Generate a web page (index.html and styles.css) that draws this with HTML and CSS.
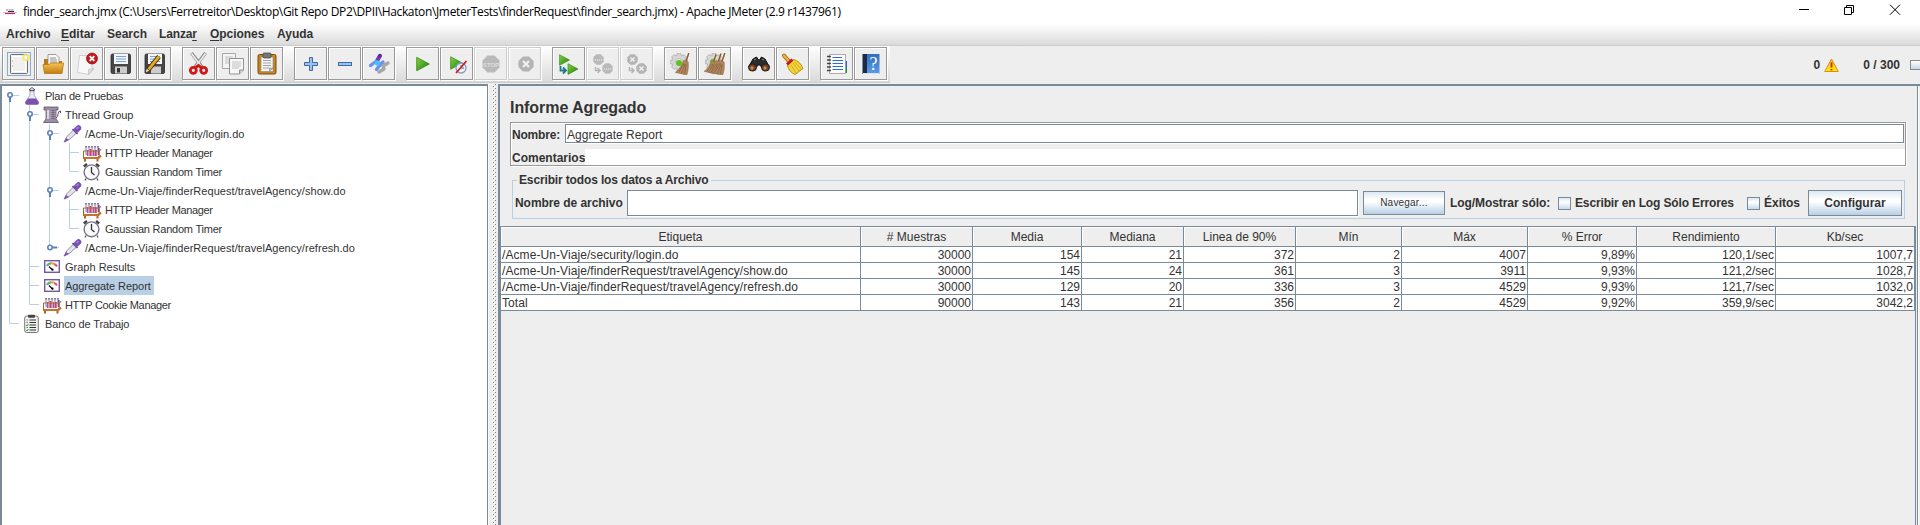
FILE: index.html
```html
<!DOCTYPE html>
<html lang="es">
<head>
<meta charset="utf-8">
<title>Apache JMeter</title>
<link rel="stylesheet" href="styles.css">
</head>
<body>
<svg class="defs" width="0" height="0" aria-hidden="true">
  <defs>
    <linearGradient id="gold" x1="0" y1="0" x2="0" y2="1"><stop offset="0" stop-color="#f3c552"/><stop offset="1" stop-color="#c17d11"/></linearGradient>
    <linearGradient id="green" x1="0" y1="0" x2="1" y2="1"><stop offset="0" stop-color="#7fd83c"/><stop offset="1" stop-color="#237a0c"/></linearGradient>
    <linearGradient id="book" x1="0" y1="0" x2="0" y2="1"><stop offset="0" stop-color="#2f6fc0"/><stop offset="1" stop-color="#5d9be6"/></linearGradient>
    <linearGradient id="warn" x1="0" y1="0" x2="0" y2="1"><stop offset="0" stop-color="#fbb034"/><stop offset="1" stop-color="#fff200"/></linearGradient>
    <symbol id="g-v" viewBox="0 0 20 19"><path d="M7.500 0V19" class="ln"/></symbol>
    <symbol id="g-t" viewBox="0 0 20 19"><path d="M7.500 0V19M7.500 9.500H17" class="ln"/></symbol>
    <symbol id="g-l" viewBox="0 0 20 19"><path d="M7.500 0V9.500H17" class="ln"/></symbol>
    <symbol id="g-root" viewBox="0 0 20 19"><path d="M7.500 9V19M8 9.500H17" class="ln"/><path d="M8 11V16" class="hd2"/><circle cx="8" cy="9" r="2.200" class="hd"/></symbol>
    <symbol id="g-open" viewBox="0 0 20 19"><path d="M7.500 0V19M8 9.500H17" class="ln"/><path d="M8 11V16" class="hd2"/><circle cx="8" cy="9" r="2.200" class="hd"/></symbol>
    <symbol id="g-shut" viewBox="0 0 20 19"><path d="M7.500 0V7M8 9.500H17" class="ln"/><path d="M10 9.500H15" class="hd2"/><circle cx="8" cy="9.500" r="2.200" class="hd"/></symbol>

    <symbol id="i-flask" viewBox="0 0 22 19"><path d="M7 4L10 1.500L13 4" fill="none" stroke="#555" stroke-width="1"/><path d="M8 4.500H12V9L16.500 16Q17 18.500 15 18.500H5Q3 18.500 3.500 16L8 9Z" fill="#eceaf2" stroke="#9a93aa" stroke-width=".8"/><path d="M6 12.500H14L16.500 16Q17 18.500 15 18.500H5Q3 18.500 3.500 16Z" fill="#7b52b0"/><path d="M7.500 4.500H12.500" stroke="#555" stroke-width="1.500"/></symbol>
    <symbol id="i-spool" viewBox="0 0 22 19"><path d="M2 2H16V5H14V14L16.500 17.500H1.500L4 14V5H2Z" fill="#9b8da5" stroke="#5e5368" stroke-width=".8"/><path d="M6 5V14" stroke="#d8d0dc" stroke-width="2"/><path d="M11 5V14" stroke="#75687f" stroke-width="3"/><path d="M4 6.500H14M4 8.500H14M4 10.500H14M4 12.500H14" stroke="#fff" stroke-opacity=".3" stroke-width=".7"/><path d="M14 13Q16 12 16 9Q16 6 18.500 6V8" fill="none" stroke="#5e5368" stroke-width="1"/></symbol>
    <symbol id="i-dropper" viewBox="0 0 22 19"><path d="M2 18L5 12.500L11.500 6L14.500 9L8 15Z" fill="#e6e2ec" stroke="#8c849a" stroke-width=".9"/><path d="M1.800 18.400L4 14L7 16Z" fill="#7d55b5"/><path d="M10.500 5L15.500 10" stroke="#58458a" stroke-width="1.600"/><path d="M14.500 6L16.500 4" stroke="#7a50b4" stroke-width="5.500" stroke-linecap="round"/><path d="M15 4.500L16 3.500" stroke="#a98bd6" stroke-width="1.500" stroke-linecap="round"/></symbol>
    <symbol id="i-tubes" viewBox="0 0 22 19"><path d="M4 3V12M7 3V13M10 3V13M13 3V13M16 3V12" stroke="#c4bcd6" stroke-width="2.200"/><path d="M4 3V4.500M7 3V4.500M10 3V4.500M13 3V4.500M16 3V4.500" stroke="#75708a" stroke-width="1.500"/><path d="M5.500 7V13M11.500 7V13" stroke="#9a55b0" stroke-width="1.300"/><path d="M8.500 6V13M13.800 7V13" stroke="#e0385a" stroke-width="1.800"/><path d="M16.800 5V12" stroke="#3c49d0" stroke-width="1.500"/><path d="M1.500 8H17L19 6.500" fill="none" stroke="#b06c38" stroke-width="1.200"/><path d="M1 15H16.500L19 12.500" fill="none" stroke="#c8732c" stroke-width="2.200"/><path d="M1.500 8V15M17 8V15" stroke="#a9622a"/><path d="M3 16V18.500M15.500 16V18.500" stroke="#a9622a" stroke-width="2"/></symbol>
    <symbol id="i-clock" viewBox="0 0 22 19"><path d="M1.800 4.500L5 2M14 2L17.200 4.500" stroke="#444" stroke-width="2.400"/><circle cx="9.500" cy="10.300" r="7.400" fill="#faf9fc" stroke="#7b7488" stroke-width="1.400"/><path d="M9.500 5V10.500L12.500 13" fill="none" stroke="#333" stroke-width="1.300"/><path d="M4 16.500L3 18.500M15 16.500L16 18.500" stroke="#555" stroke-width="1.300"/></symbol>
    <symbol id="i-gauge" viewBox="0 0 22 19"><rect x="2.700" y="3.700" width="14.600" height="11.600" fill="#fff" stroke="#7358a6" stroke-width="1.400"/><path d="M5 9Q6 6.500 9 6.300" fill="none" stroke="#5cb277" stroke-width="2.200"/><path d="M9 6.300Q11 6 12 7" fill="none" stroke="#efa23a" stroke-width="2.200"/><path d="M12 7Q14 7.500 15 9.500" fill="none" stroke="#ee5a5a" stroke-width="2.200"/><path d="M7 9.500L10.500 13" stroke="#111" stroke-width="1.200"/><circle cx="10.500" cy="12.700" r="1.100"/></symbol>
    <symbol id="i-bench" viewBox="0 0 22 19"><rect x="2.700" y="2" width="13.600" height="16.500" rx="2" fill="#f1f1f1" stroke="#777" stroke-width="1"/><rect x="6" y=".8" width="7" height="3" rx="1" fill="#444"/><path d="M7.500 6H14M7.500 8.500H14M7.500 11H14M7.500 13.500H14M7.500 16H14" stroke="#333" stroke-width="1.200"/><path d="M4.500 6H6M4.500 8.500H6M4.500 13.500H6" stroke="#777"/><path d="M4.300 11L5 12L6.300 10M4.300 16L5 17L6.300 15" fill="none" stroke="#2a9b3a"/></symbol>
    <symbol id="stop" viewBox="0 0 18 18"><path d="M5.500 .5H12.500L17.500 5.500V12.500L12.500 17.500H5.500L.5 12.500V5.500Z"/></symbol>
    <symbol id="play" viewBox="0 0 14 15"><path d="M.7 .8L13.300 7.500L.7 14.300Z" fill="url(#green)" stroke="#2b7a10" stroke-width=".7"/></symbol>
    <symbol id="gear" viewBox="0 0 16 16"><path d="M6.500 0H9.500L10 2.500L12.500 1.500L14.500 3.500L13.500 6L16 6.500V9.500L13.500 10L14.500 12.500L12.500 14.500L10 13.500L9.500 16H6.500L6 13.500L3.500 14.500L1.500 12.500L2.500 10L0 9.500V6.500L2.500 6L1.500 3.500L3.500 1.500L6 2.500Z" fill="#d6d6d4" stroke="#a4a4a4" stroke-width=".6"/><circle cx="8" cy="8" r="3" fill="#f2f2f2" stroke="#aaa" stroke-width=".6"/></symbol>
    <symbol id="broom" viewBox="0 0 14 21"><path d="M13 0L10 9" stroke="#8a5a28" stroke-width="1.400"/><path d="M8 7L12.500 8.500Q13 17 11 21L0 18.500Q6 14 8 7Z" fill="#b08660" stroke="#8f6a46" stroke-width=".5"/><path d="M8.500 10L3 18.500M9.500 10.500L6 19.500M10.500 11L9 20" stroke="#7c5733" stroke-width=".6"/></symbol>
  </defs>
</svg>

<header class="titlebar">
  <svg class="app" width="14" height="8"><path d="M0 4.500H14" stroke="#ccc"/><path d="M3 2H11" stroke="#777" stroke-width="1.200" stroke-dasharray="2 .6"/><path d="M2 5.500H12" stroke="#d4208c" stroke-width="1.200"/><path d="M5 3.500H11" stroke="#333"/></svg>
  <span class="caption">finder_search.jmx (C:\Users\Ferretreitor\Desktop\Git Repo DP2\DPII\Hackaton\JmeterTests\finderRequest\finder_search.jmx) - Apache JMeter (2.9 r1437961)</span>
  <svg class="winbtns" width="104" height="12" fill="none" stroke="#000"><path d="M0 5.500H10"/><path d="M45.500 3.500H52.500V10.500H45.500ZM47.500 3V1.500H54.500V8.500H53"/><path d="M91 .7L101 10.700M101 .7L91 10.700"/></svg>
</header>

<nav class="menubar">
  <span class="m1">Archivo</span><span class="m2"><u>E</u>ditar</span><span class="m3">Search</span><span class="m4">Lanza<u>r</u></span><span class="m5"><u>O</u>pciones</span><span class="m6">Ayuda</span>
</nav>

<div class="toolbar">
  <div class="tools">
    <div class="grp">
      <button class="tb"><svg width="31" height="31"><rect x="4.500" y="4.500" width="23" height="23" fill="none" stroke="#8fa9cc"/><rect x="7.500" y="6.500" width="17" height="19" rx="1" fill="#f0f0f0" stroke="#6f6f6f"/><path d="M9.500 8.500H22.500V23.500H9.500Z" fill="none" stroke="#fff"/><path d="M9 13H10M9 18H10" stroke="#999"/><circle cx="23" cy="9.500" r="3.800" fill="#f6e468" fill-opacity=".85"/><circle cx="23" cy="9.500" r="1.700" fill="#fffdf0"/></svg></button>
      <button class="tb"><svg width="31" height="31"><path d="M7 14V11H12L13 13H25V24H7Z" fill="#b87a14"/><path d="M11 6.500H19L22 9.500V18H11Z" fill="#f8f8f8" stroke="#888" stroke-width=".8"/><path d="M13 10H19M13 12H20M13 14H20" stroke="#777" stroke-width=".8"/><path d="M6 16.500H12L14 15H26.500L25 25.500H7.500Z" fill="url(#gold)" stroke="#b8790f" stroke-width=".8"/></svg></button>
      <button class="tb"><svg width="31" height="31"><path d="M8.500 7.500H23.500L20.500 19L23 21L18 26.500L6.500 24.500Z" fill="#f8f8f8" stroke="#d0d0d0"/><path d="M23 20L17.500 26.500L17.500 21.500Z" fill="#ddd" stroke="#bbb" stroke-width=".6"/><circle cx="21" cy="10.500" r="5.500" fill="#c4181b" stroke="#8f0c0c" stroke-width=".7"/><path d="M18.700 8.200L23.300 12.800M23.300 8.200L18.700 12.800" stroke="#fff" stroke-width="1.800"/></svg></button>
      <button class="tb"><svg width="31" height="31"><rect x="6" y="6" width="19.500" height="19.500" rx="1.500" fill="#474747" stroke="#2a2a2a" stroke-width=".8"/><rect x="9" y="6" width="14" height="10" fill="#f3f6fa"/><path d="M11 8.500H21M11 11H21M11 13.500H21" stroke="#7a9fd0"/><rect x="10" y="18.500" width="12" height="7" fill="#ccc"/><rect x="12" y="20" width="3" height="4.500" fill="#333"/></svg></button>
      <button class="tb"><svg width="31" height="31"><rect x="6" y="6" width="19.500" height="19.500" rx="1.500" fill="#474747" stroke="#2a2a2a" stroke-width=".8"/><rect x="9" y="6" width="14" height="10" fill="#f3f6fa"/><path d="M11 8.500H21M11 11H21M11 13.500H21" stroke="#7a9fd0"/><rect x="12" y="18.500" width="10" height="7" fill="#ccc"/><path d="M9.500 21.500L20 8.500" stroke="#3a2a10" stroke-width="4.600"/><path d="M9.500 21.500L20 8.500" stroke="#e9a820" stroke-width="2.800"/><path d="M6 25L7.500 20L11 23Z" fill="#f0dcb0" stroke="#222" stroke-width=".7"/></svg></button>
    </div>
    <div class="grp">
      <button class="tb"><svg width="31" height="31"><path d="M8.500 5L19 19M22.500 5L12 19" stroke="#8c8c8c" stroke-width="3.400"/><path d="M8.500 5.500L19 19.500M22.500 5.500L12 19.500" stroke="#e8e8e8" stroke-width="1.800"/><g fill="none" stroke="#cf1a1a" stroke-width="2.800"><circle cx="10.300" cy="22.300" r="3"/><circle cx="20.700" cy="22.300" r="3"/><path d="M12 20L15.500 17.500L19 20"/></g></svg></button>
      <button class="tb"><svg width="31" height="31"><path d="M5.500 5.500H18.500V20.500H5.500Z" fill="#f4f4f4" stroke="#a8a8a8"/><path d="M8 9H16M8 11H16M8 13H12M8 15H12" stroke="#c2c2c2"/><path d="M12.500 10.500H26.500V22L22.500 26H12.500Z" fill="#f7f7f7" stroke="#929292"/><path d="M15 14H24M15 16H24M15 18H24M15 20H22" stroke="#c2c2c2"/><path d="M26.500 22H22.500V26" fill="#ccc" stroke="#929292"/></svg></button>
      <button class="tb"><svg width="31" height="31"><rect x="7" y="6.500" width="18" height="19.500" rx="1.500" fill="#c6841f" stroke="#7d4d08"/><rect x="10" y="9" width="12" height="14.500" fill="#f4f4f4" stroke="#888" stroke-width=".6"/><rect x="12" y="5" width="8" height="5" rx="1" fill="#777" stroke="#444" stroke-width=".7"/><path d="M12 12.500H20M12 15H20M12 17.500H20M12 20H18" stroke="#a5a5a5"/><path d="M22 20L18.500 23.500V20Z" fill="#bbb" stroke="#777" stroke-width=".5"/></svg></button>
    </div>
    <div class="grp">
      <button class="tb"><svg width="31" height="31"><path d="M14.500 9.500H17.500V14.500H22.500V17.500H17.500V22.500H14.500V17.500H9.500V14.500H14.500Z" fill="#9dc0e8" stroke="#3a6cab"/></svg></button>
      <button class="tb"><svg width="31" height="31"><rect x="9.500" y="14.500" width="13" height="3" fill="#9dc0e8" stroke="#3a6cab"/></svg></button>
      <button class="tb"><svg width="31" height="31"><path d="M25 15L20 18L21 21L16 24" fill="none" stroke="#a7a7a7" stroke-width="3.400" stroke-linecap="round" stroke-linejoin="round"/><path d="M16.500 8.500L14 13" stroke="#7b35b5" stroke-width="4" stroke-linecap="round"/><path d="M7.500 17.500L13 13.500M14 15L17 17L13.500 21.500M17 16.500L20 14" fill="none" stroke="#6f8fee" stroke-width="3.400" stroke-linecap="round" stroke-linejoin="round"/><circle cx="14.500" cy="15" r="2.600" fill="#3cc8f5"/><circle cx="17" cy="7.800" r="2" fill="#6227a0"/></svg></button>
    </div>
    <div class="grp">
      <button class="tb"><svg width="31" height="31"><use href="#play" x="9" y="8.500" width="14" height="15"/></svg></button>
      <button class="tb"><svg width="31" height="31"><use href="#play" x="9" y="8" width="13" height="14"/><circle cx="20" cy="20" r="5" fill="#eef3fa" fill-opacity=".8" stroke="#7f9fc4" stroke-width="1.300"/><path d="M25.500 13L15 25" stroke="#d11" stroke-width="1.600"/><path d="M20 17V20H23" fill="none" stroke="#567"/></svg></button>
      <button class="tb off"><svg width="31" height="31"><use href="#stop" x="7" y="7" width="18" height="18" fill="#b9b9b9"/><text x="16" y="18.500" class="stp">STOP</text></svg></button>
      <button class="tb off"><svg width="31" height="31"><use href="#stop" x="9" y="8" width="16" height="16" fill="#b4b4b4"/><path d="M14 13L20 19M20 13L14 19" stroke="#eee" stroke-width="2.400"/></svg></button>
    </div>
    <div class="grp">
      <button class="tb"><svg width="31" height="31"><use href="#play" x="6" y="6" width="11" height="12"/><use href="#play" x="14" y="15" width="12" height="12"/><path d="M7.500 18V22.500H12M10 19.500L13 22.500L10 25.500" fill="none" stroke="#1d7a86" stroke-width="1.800"/></svg></button>
      <button class="tb off"><svg width="31" height="31"><use href="#stop" x="6" y="6" width="11" height="11" fill="#b9b9b9"/><use href="#stop" x="15" y="15" width="11" height="11" fill="#b9b9b9"/><path d="M8 12H15M17 21H24" stroke="#ddd" stroke-width="1.500" stroke-dasharray="1.200 .8"/><path d="M8.500 19V22.500H12M10.500 20L13 22.500L10.500 25" fill="none" stroke="#b4b4b4" stroke-width="1.500"/></svg></button>
      <button class="tb off"><svg width="31" height="31"><use href="#stop" x="6" y="6" width="11" height="11" fill="#b4b4b4"/><use href="#stop" x="15" y="15" width="11" height="11" fill="#b4b4b4"/><path d="M9.500 9.500L13.500 13.500M13.500 9.500L9.500 13.500M18.500 18.500L22.500 22.500M22.500 18.500L18.500 22.500" stroke="#eee" stroke-width="1.700"/><path d="M8.500 19V22.500H12M10.500 20L13 22.500L10.500 25" fill="none" stroke="#b4b4b4" stroke-width="1.500"/></svg></button>
    </div>
    <div class="grp">
      <button class="tb"><svg width="31" height="31"><use href="#gear" x="5" y="5" width="18" height="18"/><circle cx="14" cy="15" r="3" fill="#5fc31e"/><use href="#broom" x="10" y="5" width="15" height="22"/></svg></button>
      <button class="tb"><svg width="31" height="31"><use href="#gear" x="6" y="5" width="18" height="18"/><circle cx="14" cy="14" r="3" fill="#5fc31e"/><use href="#broom" x="5" y="5" width="13" height="22"/><use href="#broom" x="9" y="5" width="14" height="22"/><use href="#broom" x="12" y="5" width="15" height="22"/></svg></button>
    </div>
    <div class="grp">
      <button class="tb"><svg width="31" height="31"><path d="M10 11L13.500 9L15.500 12H16.500L18.500 9L22 11L26.500 19L21 23L17 17H15L11 23L5.500 19Z" fill="#2c2c2c" stroke="#111"/><path d="M11 12L13 11M21 12L19 11" stroke="#888"/><ellipse cx="9.500" cy="19.500" rx="4" ry="3.600" fill="#6e3d20" stroke="#222"/><ellipse cx="22.500" cy="19.500" rx="4" ry="3.600" fill="#6e3d20" stroke="#222"/><circle cx="9" cy="20" r="1.700" fill="#c98555"/><circle cx="22" cy="20" r="1.700" fill="#c98555"/></svg></button>
      <button class="tb"><svg width="31" height="31"><path d="M7 7.500L12.500 14" stroke="#9b6512" stroke-width="4" stroke-linecap="round"/><path d="M7 7.500L12.500 14" stroke="#eeb140" stroke-width="2.400" stroke-linecap="round"/><path d="M10.500 17.500L16.500 11.500Q23 13 26 20.500L18 26.500Q12 24 10.500 17.500Z" fill="#f2d43a" stroke="#b8920c"/><path d="M14 17L19 25M16 15L22 23M18 14L24 21" stroke="#c9a415" stroke-width=".8"/><path d="M10 16.500L15.500 11.500" stroke="#c4161c" stroke-width="3"/></svg></button>
    </div>
    <div class="grp">
      <button class="tb"><svg width="31" height="31"><path d="M23 13H26V20H23Z" fill="#2a62d8"/><path d="M23 20H26V25H23Z" fill="#1b8a2c"/><path d="M8.500 6.500H24.500V25.500H8.500Z" fill="#fbfbfb" stroke="#999" stroke-width=".8"/><path d="M11.500 9.500H21M11.500 12.500H22M11.500 15.500H22M11.500 18.500H22M11.500 21.500H22" stroke="#2d6fd2"/><path d="M6 8.500H10M6 12H10M6 15.500H10M6 19H10M6 22.500H10" stroke="#444" stroke-width="1.400"/></svg></button>
      <button class="tb"><svg width="31" height="31"><path d="M8 6H24.500V26H8Z" fill="url(#book)"/><path d="M7.500 6H12V26H7.500Z" fill="#1d2a44"/><path d="M8 25.500H24" stroke="#d7e3f5"/><text x="18.500" y="21.500" class="q">?</text></svg></button>
    </div>
  </div>
  <div class="counters">
    <span class="errs">0</span>
    <svg width="15" height="15"><path d="M7.500 1L14.300 13.500H.7Z" fill="url(#warn)" stroke="#e08a1a" stroke-linejoin="round"/><path d="M7.500 4.500V9.500M7.500 11V12.500" stroke="#b5380f" stroke-width="1.800"/></svg>
    <span class="thr">0 / 300</span>
    <i class="led"></i>
  </div>
</div>

<main class="work">
  <section class="tree">
    <div class="row"><svg class="g"><use href="#g-root"/></svg><svg class="ic"><use href="#i-flask"/></svg><span class="t2">Plan de Pruebas</span></div>
    <div class="row"><svg class="g"><use href="#g-v"/></svg><svg class="g"><use href="#g-open"/></svg><svg class="ic"><use href="#i-spool"/></svg><span>Thread Group</span></div>
    <div class="row"><svg class="g"><use href="#g-v"/></svg><svg class="g"><use href="#g-v"/></svg><svg class="g"><use href="#g-open"/></svg><svg class="ic"><use href="#i-dropper"/></svg><span>/Acme-Un-Viaje/security/login.do</span></div>
    <div class="row"><svg class="g"><use href="#g-v"/></svg><svg class="g"><use href="#g-v"/></svg><svg class="g"><use href="#g-v"/></svg><svg class="g"><use href="#g-t"/></svg><svg class="ic"><use href="#i-tubes"/></svg><span class="t3">HTTP Header Manager</span></div>
    <div class="row"><svg class="g"><use href="#g-v"/></svg><svg class="g"><use href="#g-v"/></svg><svg class="g"><use href="#g-v"/></svg><svg class="g"><use href="#g-l"/></svg><svg class="ic"><use href="#i-clock"/></svg><span class="t2">Gaussian Random Timer</span></div>
    <div class="row"><svg class="g"><use href="#g-v"/></svg><svg class="g"><use href="#g-v"/></svg><svg class="g"><use href="#g-open"/></svg><svg class="ic"><use href="#i-dropper"/></svg><span class="wide">/Acme-Un-Viaje/finderRequest/travelAgency/show.do</span></div>
    <div class="row"><svg class="g"><use href="#g-v"/></svg><svg class="g"><use href="#g-v"/></svg><svg class="g"><use href="#g-v"/></svg><svg class="g"><use href="#g-t"/></svg><svg class="ic"><use href="#i-tubes"/></svg><span class="t3">HTTP Header Manager</span></div>
    <div class="row"><svg class="g"><use href="#g-v"/></svg><svg class="g"><use href="#g-v"/></svg><svg class="g"><use href="#g-v"/></svg><svg class="g"><use href="#g-l"/></svg><svg class="ic"><use href="#i-clock"/></svg><span class="t2">Gaussian Random Timer</span></div>
    <div class="row"><svg class="g"><use href="#g-v"/></svg><svg class="g"><use href="#g-v"/></svg><svg class="g"><use href="#g-shut"/></svg><svg class="ic"><use href="#i-dropper"/></svg><span class="wide">/Acme-Un-Viaje/finderRequest/travelAgency/refresh.do</span></div>
    <div class="row"><svg class="g"><use href="#g-v"/></svg><svg class="g"><use href="#g-t"/></svg><svg class="ic"><use href="#i-gauge"/></svg><span>Graph Results</span></div>
    <div class="row"><svg class="g"><use href="#g-v"/></svg><svg class="g"><use href="#g-t"/></svg><svg class="ic"><use href="#i-gauge"/></svg><span class="sel">Aggregate Report</span></div>
    <div class="row"><svg class="g"><use href="#g-v"/></svg><svg class="g"><use href="#g-l"/></svg><svg class="ic"><use href="#i-tubes"/></svg><span class="t3">HTTP Cookie Manager</span></div>
    <div class="row"><svg class="g"><use href="#g-l"/></svg><svg class="ic"><use href="#i-bench"/></svg><span class="t1">Banco de Trabajo</span></div>
  </section>
  <div class="divider"></div>
  <section class="panel">
    <h1>Informe Agregado</h1>
    <div class="namebox">
      <div class="nm"><label>Nombre:</label><div class="field">Aggregate Report</div></div>
      <div class="cm"><label>Comentarios</label><div class="plain"></div></div>
    </div>
    <fieldset class="file">
      <legend>Escribir todos los datos a Archivo</legend>
      <div class="filerow">
        <label class="fn">Nombre de archivo</label><div class="fileinput"></div><button class="btn nav">Navegar...</button>
        <span class="logl">Log/Mostrar sólo:</span><i class="cb"></i><span class="errl">Escribir en Log Sólo Errores</span><i class="cb"></i><span class="exl">Éxitos</span><button class="btn conf">Configurar</button>
      </div>
    </fieldset>
    <div class="scroll">
      <table>
        <colgroup><col class="c1"><col class="c2"><col class="c3"><col class="c4"><col class="c5"><col class="c6"><col class="c7"><col class="c8"><col class="c9"><col class="c10"></colgroup>
        <thead><tr><th>Etiqueta</th><th># Muestras</th><th>Media</th><th>Mediana</th><th>Linea de 90%</th><th>Mín</th><th>Máx</th><th>% Error</th><th>Rendimiento</th><th>Kb/sec</th></tr></thead>
        <tbody>
          <tr><td>/Acme-Un-Viaje/security/login.do</td><td>30000</td><td>154</td><td>21</td><td>372</td><td>2</td><td>4007</td><td>9,89%</td><td>120,1/sec</td><td>1007,7</td></tr>
          <tr><td>/Acme-Un-Viaje/finderRequest/travelAgency/show.do</td><td>30000</td><td>145</td><td>24</td><td>361</td><td>3</td><td>3911</td><td>9,93%</td><td>121,2/sec</td><td>1028,7</td></tr>
          <tr><td>/Acme-Un-Viaje/finderRequest/travelAgency/refresh.do</td><td>30000</td><td>129</td><td>20</td><td>336</td><td>3</td><td>4529</td><td>9,93%</td><td>121,7/sec</td><td>1032,0</td></tr>
          <tr><td>Total</td><td>90000</td><td>143</td><td>21</td><td>356</td><td>2</td><td>4529</td><td>9,92%</td><td>359,9/sec</td><td>3042,2</td></tr>
        </tbody>
      </table>
    </div>
  </section>
  <div class="edge"></div>
</main>
</body>
</html>
```

FILE: styles.css
```css
* { box-sizing: border-box; }
body {
  margin: 0; width: 1920px; height: 525px; overflow: hidden;
  display: flex; flex-direction: column;
  background: #eee; color: #333;
  font: 12px/14px "Liberation Sans", Arial, sans-serif;
}
button { font: inherit; color: inherit; padding: 0; margin: 0; }
svg { display: block; flex: none; }
.defs { position: absolute; }
.ln { fill: none; stroke: #b8cfe5; stroke-width: 1; }
.hd { fill: #fff; stroke: #5b82bd; stroke-width: 1.6; }
.hd2 { stroke: #5b82bd; stroke-width: 2; }

.titlebar { height: 24px; flex: none; background: #fff; display: flex; align-items: center; padding: 0 17px 0 3px; color: #000; }
.app { margin-right: 6px; }
.caption { font: 12px/16px "Open Sans", "Noto Sans", sans-serif; white-space: nowrap; letter-spacing: -.355px; }
.winbtns { margin: -4px 0 0 auto; }

.menubar { height: 22px; flex: none; display: flex; background: linear-gradient(#fff, #dadada); border-bottom: 1px solid #ccc; font-weight: bold; padding: 3px 0 0 6px; }
.menubar span { white-space: nowrap; }
.m1 { width: 55px; } .m2 { width: 46px; } .m3 { width: 52px; } .m4 { width: 51px; letter-spacing: -.15px; } .m5 { width: 67px; letter-spacing: -.05px; } .m6 { width: 40px; }
.menubar u { text-underline-offset: 2px; text-decoration-thickness: 1px; }

.toolbar { height: 38px; flex: none; display: flex; justify-content: space-between; }
.tools { width: 890px; height: 37px; padding: 1px 0 0 2px; display: flex; gap: 10px; background: linear-gradient(#fff, #dadada); border-bottom: 1px solid #ccc; }
.grp { display: flex; }
.tb { width: 33px; height: 33px; margin-right: 1px; border: 1px solid #999; box-shadow: 1px 1px #fff, inset 1px 1px #fff; background: #eee; display: block; }
.tb.off { border-color: #ccc; }
.stp { font: bold 6px "Liberation Sans", sans-serif; fill: #ddd; text-anchor: middle; }
.q { font: 18px "Liberation Serif", serif; fill: #fff; text-anchor: middle; }
.counters { display: flex; align-items: center; font-weight: bold; }
.counters svg { margin: 0 24px 0 4px; }
.led { width: 10px; height: 10px; margin: -1px 0 0 10px; border: 1px solid #8a8a8a; border-right: 0; background: linear-gradient(#fff, #c5d8ea); }

.work { flex: 1; display: flex; min-height: 0; }
.tree { width: 488px; flex: none; background: #fff; border: 1px solid #7a8a99; border-width: 2px 1px 0 2px; font-size: 11px; }
.row { display: flex; height: 19px; line-height: 21px; white-space: nowrap; }
.g { width: 20px; height: 19px; }
.ic { width: 22px; height: 19px; overflow: visible; }
.row span { padding: 0 2px 0 1px; height: 19px; }
.row .sel { background: #b8cfe5; width: 90px; letter-spacing: -.07px; }
.t1 { letter-spacing: -.12px; }
.t2 { letter-spacing: -.22px; }
.t3 { letter-spacing: -.34px; }
.wide { letter-spacing: .045px; }
.divider {
  width: 10px; flex: none; border-left: 1px solid #fff;
  background:
    linear-gradient(#7a8088 1px, transparent 1px) 4px 2px / 1px 4px repeat-y,
    linear-gradient(#7a8088 1px, transparent 1px) 6px 4px / 1px 4px repeat-y,
    linear-gradient(#fff 1px, transparent 1px) 3px 1px / 1px 4px repeat-y,
    linear-gradient(#fff 1px, transparent 1px) 5px 3px / 1px 4px repeat-y,
    #eee;
}
.panel { width: 1418px; flex: none; border: solid #7a8a99; border-width: 2px 0 0 2px; display: flex; flex-direction: column; }
.edge { width: 4px; border: 1px solid #7a8a99; border-width: 2px 0 0; box-shadow: inset 1px 0 #eee, inset 2px 0 #7a8a99, inset 3px 0 #fff; }

h1 { margin: 0; font-size: 16px; line-height: 20px; height: 36px; padding: 12px 0 0 10px; letter-spacing: -.06px; }
.namebox { margin: 0 11px 0 10px; width: 1396px; height: 44px; border: 1px solid #999; box-shadow: 1px 1px #fff, inset 1px 1px #fff; padding: 1px 1px 0; display: flex; flex-direction: column; gap: 6px; font-weight: bold; }
.nm { display: flex; height: 19px; }
.nm label { width: 53px; line-height: 22px; letter-spacing: -.2px; }
.field { flex: 1; border: 1px solid #7a8a99; background: #fff; box-shadow: 0 1px #fff; font-weight: normal; line-height: 20px; padding-left: 1px; letter-spacing: .04px; }
.cm { display: flex; height: 16px; }
.cm label { width: 73px; line-height: 18px; }
.plain { flex: 1; background: #fff; margin-right: -1px; }

.file { margin: 7px 0 0 12px; width: 1393px; height: 46px; border: 1px solid #b8cfe5; padding: 0; font-weight: bold; min-width: 0; }
.file legend { margin-left: 4px; padding: 0 2px; line-height: 15px; height: 14px; letter-spacing: -.14px; }
.filerow { display: flex; align-items: center; height: 32px; padding-left: 2px; }
.filerow span, .fn { white-space: nowrap; line-height: 16px; }
.fn { width: 112px; letter-spacing: -.06px; }
.fileinput { width: 731px; height: 26px; border: 1px solid #7a8a99; background: #fff; margin-right: 5px; box-shadow: 1px 1px #fff; }
.btn { border: 1px solid #7a8a99; background: linear-gradient(#dde8f3, #fff 35%, #fff 45%, #b8cfe5); font-weight: bold; }
.nav { width: 82px; height: 24px; font-size: 10px; font-weight: normal; margin-right: 5px; letter-spacing: .2px; }
.conf { width: 94px; height: 26px; }
.logl { width: 108px; letter-spacing: -.07px; }
.cb { width: 13px; height: 13px; border: 1px solid #7a8a99; background: linear-gradient(#dde8f3, #fff 40%, #c5d8ea); margin-right: 4px; }
.errl { width: 172px; letter-spacing: -.14px; }
.exl { width: 44px; }

.scroll { flex: 1; margin-top: 7px; border: 1px solid #7a8a99; border-width: 1px 1px 0; width: 1416px; }
table { table-layout: fixed; width: 1414px; border-collapse: separate; border-spacing: 0; }
th, td { padding: 2px 1px 0; height: 16px; line-height: 13px; border: solid #7a8a99; border-width: 0 1px 1px 0; text-align: right; font-weight: normal; white-space: nowrap; }
th { height: 20px; text-align: center; box-shadow: inset 1px 1px #fff; background: #eee; }
td { background: #fff; }
td:first-child { text-align: left; letter-spacing: .08px; }
.c1 { width: 360px; } .c2 { width: 112px; } .c3 { width: 109px; } .c4 { width: 102px; } .c5 { width: 112px; }
.c6 { width: 106px; } .c7 { width: 126px; } .c8 { width: 109px; } .c9 { width: 139px; } .c10 { width: 139px; }
```
